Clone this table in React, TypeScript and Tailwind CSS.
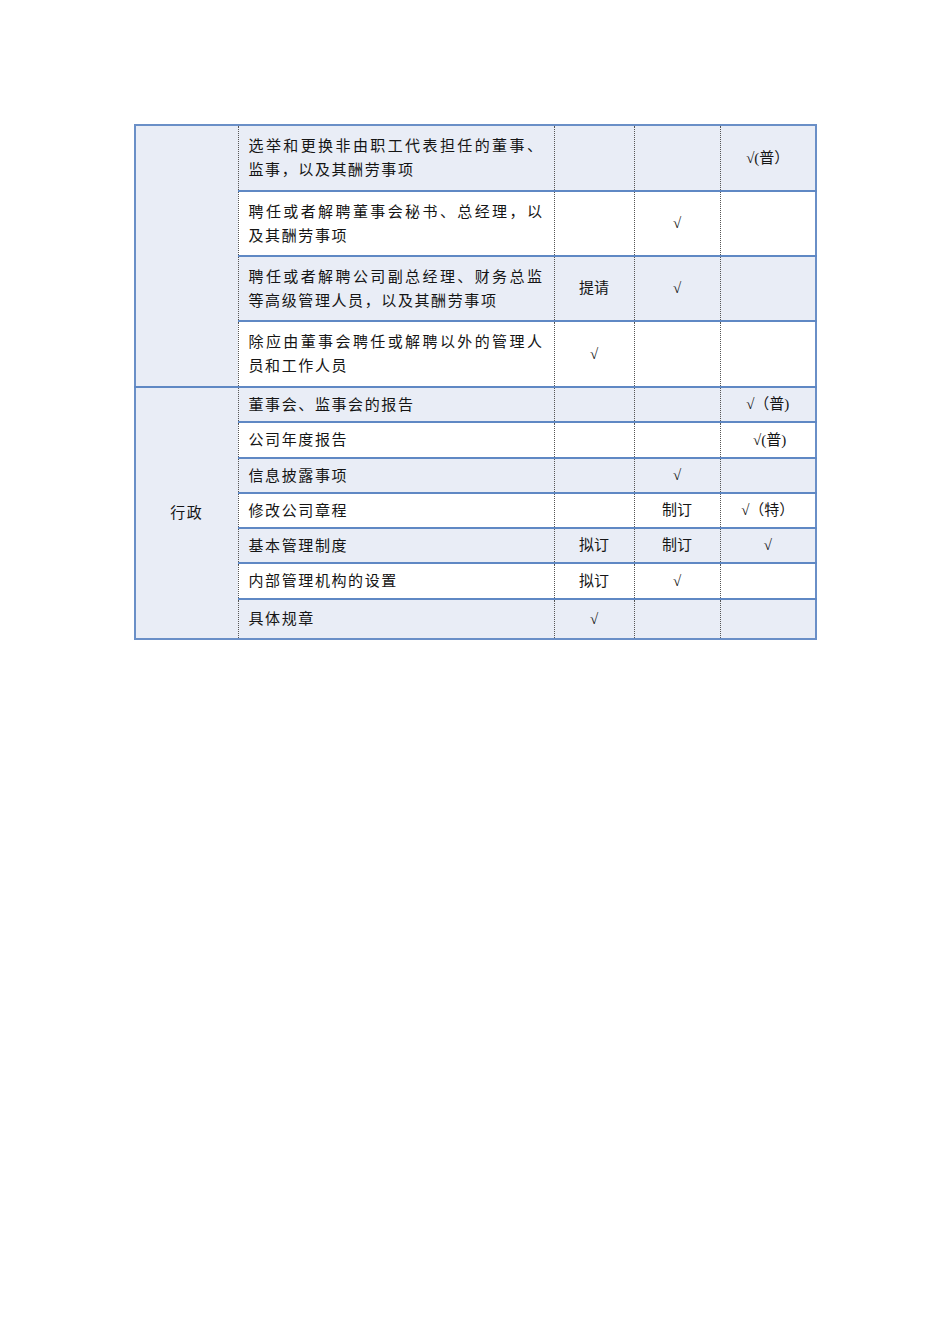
const font = { fontFamily: '"Liberation Serif", "Noto Sans CJK SC", serif' };

type Row = { item: string; a?: string; b?: string; c?: string; h: string };

const groupOne: Row[] = [
  { item: "选举和更换非由职工代表担任的董事、监事，以及其酬劳事项", c: "√(普）", h: "h-[66px]" },
  { item: "聘任或者解聘董事会秘书、总经理，以及其酬劳事项", b: "√", h: "h-[65px]" },
  { item: "聘任或者解聘公司副总经理、财务总监等高级管理人员，以及其酬劳事项", a: "提请", b: "√", h: "h-[65px]" },
  { item: "除应由董事会聘任或解聘以外的管理人员和工作人员", a: "√", h: "h-[66px]" },
];

const groupTwo: Row[] = [
  { item: "董事会、监事会的报告", c: "√（普)", h: "h-[35px]" },
  { item: "公司年度报告", c: " √(普)", h: "h-[36px]" },
  { item: "信息披露事项", b: "√", h: "h-[35px]" },
  { item: "修改公司章程", b: "制订", c: "√（特）", h: "h-[35px]" },
  { item: "基本管理制度", a: "拟订", b: "制订", c: "√", h: "h-[35px]" },
  { item: "内部管理机构的设置", a: "拟订", b: "√", h: "h-[36px]" },
  { item: "具体规章", a: "√", h: "h-[40px]" },
];

const shade = "bg-[#e9edf6]";
const dotted = "border-l border-l-[#555] [border-left-style:dotted]";
const hline = "border-t-2 border-t-[#5f88c4] [border-top-style:solid]";

function Cells({ row, idx, top }: { row: Row; idx: number; top: boolean }) {
  const bg = idx % 2 === 0 ? shade : "bg-white";
  const first = top ? hline : "";
  const cell = `${bg} ${first} ${dotted} p-0 text-center align-middle`;
  return (
    <>
      <td
        className={`${bg} ${first} ${dotted} ${row.h} px-[10px] py-[4px] align-middle text-justify leading-[24px] tracking-[1.6px]`}
      >
        {row.item}
      </td>
      <td className={cell}>{row.a}</td>
      <td className={cell}>{row.b}</td>
      <td className={`${cell} whitespace-pre`}>{row.c}</td>
    </>
  );
}

export default function App() {
  return (
    <div className="min-h-[1344px] w-[950px] bg-white pt-[124px]" style={font}>
      <table className="ml-[134px] w-[681px] table-fixed border-collapse border-2 border-[#6a8fc7] text-[15px] text-[#151515]">
        <colgroup>
          <col className="w-[103px]" />
          <col className="w-[316px]" />
          <col className="w-[80px]" />
          <col className="w-[86px]" />
          <col className="w-[96px]" />
        </colgroup>
        <tbody>
          {groupOne.map((row, i) => (
            <tr key={row.item}>
              {i === 0 && <td rowSpan={groupOne.length} className={`${shade} p-0`} />}
              <Cells row={row} idx={i} top={i > 0} />
            </tr>
          ))}
          {groupTwo.map((row, i) => (
            <tr key={row.item}>
              {i === 0 && (
                <td
                  rowSpan={groupTwo.length}
                  className={`${shade} ${hline} p-0 text-center align-middle tracking-[1.6px]`}
                >
                  行政
                </td>
              )}
              <Cells row={row} idx={i} top />
            </tr>
          ))}
        </tbody>
      </table>
    </div>
  );
}
